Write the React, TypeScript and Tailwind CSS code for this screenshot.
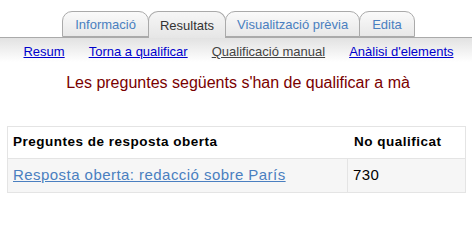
import React from "react";

const font = { fontFamily: '"Liberation Sans", Arial, sans-serif' };

export default function App() {
  return (
    <div className="w-[472px] h-[200px] bg-white overflow-hidden" style={font}>
      <div className="h-[11px]" />
      <div className="flex justify-center items-end h-[26px] pl-[5px]">
        <div className="h-[26px] px-[12px] flex items-center pt-[2px] border border-[#aaaaaa] rounded-t-[10px] bg-gradient-to-b from-[#fafafa] to-[#e8e8e8] text-[13px] text-[#4a7fc0]">Informació</div>
        <div className="relative z-10 -ml-px h-[27px] -mb-px px-[11px] flex items-center pb-[1px] pt-[2px] border border-b-0 border-[#aaaaaa] rounded-t-[10px] bg-gradient-to-b from-[#f6f6f6] to-[#e6e6e6] text-[13px] text-[#333333]">Resultats</div>
        <div className="-ml-px h-[26px] px-[11px] flex items-center pt-[2px] border border-[#aaaaaa] rounded-t-[10px] bg-gradient-to-b from-[#fafafa] to-[#e8e8e8] text-[13px] text-[#4a7fc0]">Visualització prèvia</div>
        <div className="-ml-px h-[26px] px-[12px] flex items-center pt-[2px] border border-[#aaaaaa] rounded-t-[10px] bg-gradient-to-b from-[#fafafa] to-[#e8e8e8] text-[13px] text-[#4a7fc0]">Edita</div>
      </div>
      <div className="h-[25px] border-t border-[#aaaaaa] bg-gradient-to-b from-[#e2e2e2] to-[#ffffff] flex justify-center items-center gap-[24px] text-[13px] pt-[4px] pl-[5px]">
        <span className="text-[#0000cc] underline">Resum</span>
        <span className="text-[#0000cc] underline">Torna a qualificar</span>
        <span className="text-[#444444] underline">Qualificació manual</span>
        <span className="text-[#0000cc] underline">Anàlisi d'elements</span>
      </div>
      <div className="mt-[9px] text-center text-[16px] text-[#7a0000] pl-[4px]">Les preguntes següents s'han de qualificar a mà</div>
      <div className="mt-[31px] ml-[7px] w-[459px] border border-[#e4e4e4]">
        <div className="flex h-[32px] bg-white border-b border-[#e4e4e4] items-center text-[13.5px] tracking-[0.5px] font-bold text-black">
          <div className="w-[340px] pl-[5px]">Preguntes de resposta oberta</div>
          <div className="flex-1 pl-[6px]">No qualificat</div>
        </div>
        <div className="flex h-[33px] bg-[#f6f6f6] items-stretch text-[15px] tracking-[0.45px]">
          <div className="w-[340px] pl-[5px] flex items-center border-r border-[#e4e4e4]">
            <span className="text-[#4a7fc0] underline">Resposta oberta: redacció sobre París</span>
          </div>
          <div className="flex-1 pl-[5px] flex items-center text-black">730</div>
        </div>
      </div>
    </div>
  );
}
